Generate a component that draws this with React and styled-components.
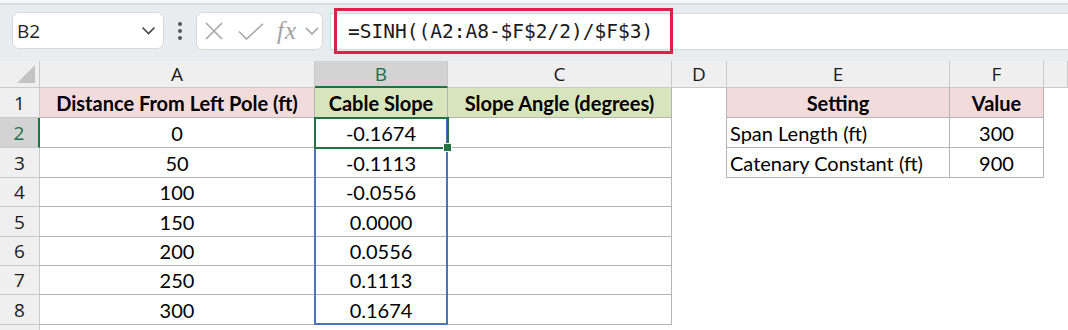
import styled, { createGlobalStyle } from "styled-components";

/*
  엑셀 시트 화면 (수식 입력줄 + 셀 그리드)
*/

const GlobalStyle = createGlobalStyle`
  body {
    margin: 0;
    background: #ffffff;
  }
`;

// 열 너비, 행 높이
const COLS = [
  { key: "A", width: 275 },
  { key: "B", width: 133 },
  { key: "C", width: 224 },
  { key: "D", width: 55 },
  { key: "E", width: 223 },
  { key: "F", width: 94 },
  { key: "G", width: 24 },
];
const ROW_HEIGHTS = [30, 30, 30, 29, 30, 29, 29, 30, 20];
const HEADER_H = 27;
const ROWHEAD_W = 40;

const table = {
  1: { A: "Distance From Left Pole (ft)", B: "Cable Slope", C: "Slope Angle (degrees)", E: "Setting", F: "Value" },
  2: { A: "0", B: "-0.1674", E: "Span Length (ft)", F: "300" },
  3: { A: "50", B: "-0.1113", E: "Catenary Constant (ft)", F: "900" },
  4: { A: "100", B: "-0.0556" },
  5: { A: "150", B: "0.0000" },
  6: { A: "200", B: "0.0556" },
  7: { A: "250", B: "0.1113" },
  8: { A: "300", B: "0.1674" },
};

// 셀 스타일 결정
const getCellProps = (row, col) => {
  const main = row <= 8 && ["A", "B", "C"].includes(col);
  const side = row <= 3 && ["E", "F"].includes(col);
  let fill = "none";
  if (row === 1 && (col === "A" || side)) fill = "pink";
  if (row === 1 && (col === "B" || col === "C")) fill = "green";
  return {
    $bordered: main || side,
    $leftBorder: side && col === "E",
    $fill: fill,
    $bold: row === 1,
    $align: side && col === "E" && row > 1 ? "left" : "center",
  };
};

function App() {
  const colOffsets = [];
  let acc = ROWHEAD_W;
  COLS.forEach((c) => {
    colOffsets.push(acc);
    acc += c.width;
  });
  const rowTop = (r) =>
    HEADER_H + ROW_HEIGHTS.slice(0, r - 1).reduce((a, b) => a + b, 0);

  const bLeft = colOffsets[1];
  const bWidth = COLS[1].width;

  return (
    <>
      <GlobalStyle />
      <Page>
        {/* 수식 입력줄 */}
        <Toolbar>
          <NameBox>
            <span>B2</span>
            <Chevron width="15" height="9" viewBox="0 0 15 9">
              <path d="M1.5 1.5 L7.5 7.5 L13.5 1.5" />
            </Chevron>
          </NameBox>
          <Dots>
            <i />
            <i />
            <i />
          </Dots>
          <FxBox>
            <IconSlot $w={18}>
              <svg width="18" height="18" viewBox="0 0 18 18">
                <path d="M1 1 L17 17 M17 1 L1 17" stroke="#a3a3a3" strokeWidth="1.5" fill="none" />
              </svg>
            </IconSlot>
            <IconSlot $w={26}>
              <svg width="26" height="17" viewBox="0 0 26 17">
                <path d="M1 8.5 L8.5 16 L25 0.8" stroke="#a3a3a3" strokeWidth="1.5" fill="none" />
              </svg>
            </IconSlot>
            <FxText>fx</FxText>
            <Chevron width="14" height="8" viewBox="0 0 14 8" $light>
              <path d="M1 1 L7 7 L13 1" />
            </Chevron>
          </FxBox>
          <FormulaInput>
            <FormulaHighlight>=SINH((A2:A8-$F$2/2)/$F$3)</FormulaHighlight>
          </FormulaInput>
        </Toolbar>

        {/* 시트 그리드 */}
        <Sheet
          $cols={`${ROWHEAD_W}px ${COLS.map((c) => c.width + "px").join(" ")}`}
          $rows={`${HEADER_H}px ${ROW_HEIGHTS.map((h) => h + "px").join(" ")}`}
        >
          <Corner>
            <CornerTriangle />
          </Corner>
          {COLS.map((c) => (
            <ColHeader key={c.key} $active={c.key === "B"}>
              {c.key === "G" ? "" : c.key}
            </ColHeader>
          ))}

          {ROW_HEIGHTS.map((_, i) => {
            const row = i + 1;
            return [
              <RowHeader key={"h" + row} $active={row === 2}>
                {row <= 8 ? row : ""}
              </RowHeader>,
              ...COLS.map((c) => (
                <Cell key={row + c.key} {...getCellProps(row, c.key)}>
                  {table[row] && table[row][c.key]}
                </Cell>
              )),
            ];
          })}

          {/* 선택 범위 B2:B8 */}
          <RangeBox
            style={{
              left: bLeft - 1,
              top: rowTop(2) - 1,
              width: bWidth + 1,
              height: rowTop(9) - rowTop(2) + 1,
            }}
          />
          {/* 활성 셀 B2 */}
          <ActiveCell
            style={{
              left: bLeft - 1,
              top: rowTop(2) - 1,
              width: bWidth + 2,
              height: ROW_HEIGHTS[1] + 2,
            }}
          >
            <FillHandle />
          </ActiveCell>
        </Sheet>
      </Page>
    </>
  );
}

export default App;

/* 스타일 */

const Page = styled.div`
  width: 1068px;
  height: 330px;
  overflow: hidden;
  background: #ffffff;
`;

const Toolbar = styled.div`
  height: 61px;
  box-sizing: border-box;
  background: #e9ecef;
  border-top: 3px solid #f5f6f7;
  box-shadow: inset 0 4px 3px -3px rgba(0, 0, 0, 0.12);
  display: flex;
  align-items: flex-start;
  padding: 9px 0 0 12px;
`;

const NameBox = styled.div`
  width: 152px;
  height: 37px;
  box-sizing: border-box;
  background: #ffffff;
  border: 1px solid #d6d9dc;
  border-radius: 7px;
  display: flex;
  align-items: center;
  justify-content: space-between;
  padding: 0 7px 0 4px;
  font-family: "Open Sans", "Noto Sans", sans-serif;
  font-size: 19px;
  color: #1f1f1f;
`;

const Chevron = styled.svg`
  fill: none;
  stroke: ${(p) => (p.$light ? "#a3a3a3" : "#444")};
  stroke-width: 1.6;
`;

const Dots = styled.div`
  width: 32px;
  height: 37px;
  display: flex;
  flex-direction: column;
  align-items: center;
  justify-content: center;
  gap: 3px;

  i {
    width: 4px;
    height: 4px;
    border-radius: 50%;
    background: #555;
  }
`;

const FxBox = styled.div`
  width: 127px;
  height: 38px;
  box-sizing: border-box;
  background: #ffffff;
  border: 1px solid #d6d9dc;
  border-radius: 7px;
  display: flex;
  align-items: center;
  gap: 0;
  padding: 0 0 0 8px;
`;

const IconSlot = styled.span`
  width: ${(p) => p.$w}px;
  display: flex;
  align-items: center;
  margin-right: 15px;
`;

const FxText = styled.span`
  font-family: "Liberation Serif", "DejaVu Serif", serif;
  font-style: italic;
  font-size: 25px;
  line-height: 1;
  color: #a3a3a3;
  margin: -2px 8px 0 -2px;
  letter-spacing: 1px;
`;

const FormulaInput = styled.div`
  flex: 1;
  height: 37px;
  margin: 1px 0 0 7px;
  box-sizing: border-box;
  background: #ffffff;
  border-top: 1px solid #d6d9dc;
  border-bottom: 1px solid #d6d9dc;
  border-left: 1px solid #d6d9dc;
  position: relative;
`;

const FormulaHighlight = styled.div`
  position: absolute;
  left: 3px;
  top: -6px;
  width: 339px;
  height: 46px;
  box-sizing: border-box;
  border: 3px solid #e0204a;
  display: flex;
  align-items: center;
  padding-left: 11px;
  font-family: "DejaVu Sans Mono", "Liberation Mono", monospace;
  font-size: 19.5px;
  color: #1a1a1a;
`;

const Sheet = styled.div`
  position: relative;
  display: grid;
  grid-template-columns: ${(p) => p.$cols};
  grid-template-rows: ${(p) => p.$rows};
  font-family: "Lato", "Open Sans", sans-serif;
`;

const Corner = styled.div`
  background: #efefef;
  border-right: 1px solid #c9c9c9;
  border-bottom: 1px solid #c9c9c9;
  position: relative;
`;

const CornerTriangle = styled.div`
  position: absolute;
  right: 4px;
  bottom: 4px;
  width: 0;
  height: 0;
  border-left: 18px solid transparent;
  border-bottom: 18px solid #c3c3c3;
`;

const ColHeader = styled.div`
  box-sizing: border-box;
  background: ${(p) => (p.$active ? "#d3d3d3" : "#efefef")};
  color: ${(p) => (p.$active ? "#1d7044" : "#1a1a1a")};
  border-right: 1px solid #c9c9c9;
  border-bottom: ${(p) => (p.$active ? "2px solid #217346" : "1px solid #c9c9c9")};
  display: flex;
  align-items: center;
  justify-content: center;
  font-family: "Open Sans", "Noto Sans", sans-serif;
  font-size: 19px;
  padding-top: ${(p) => (p.$active ? "1px" : "0")};
`;

const RowHeader = styled.div`
  box-sizing: border-box;
  background: ${(p) => (p.$active ? "#d3d3d3" : "#efefef")};
  color: ${(p) => (p.$active ? "#1d7044" : "#1a1a1a")};
  border-right: ${(p) => (p.$active ? "2px solid #217346" : "1px solid #c9c9c9")};
  border-bottom: 1px solid #c9c9c9;
  display: flex;
  align-items: center;
  justify-content: center;
  font-family: "Open Sans", "Noto Sans", sans-serif;
  font-size: 19px;
`;

const fills = {
  none: "#ffffff",
  pink: "#f2dcdb",
  green: "#d8e4bc",
};

const Cell = styled.div`
  box-sizing: border-box;
  background: ${(p) => fills[p.$fill]};
  border-right: 1px solid ${(p) => (p.$bordered ? "#b4b4b4" : "transparent")};
  border-bottom: 1px solid ${(p) => (p.$bordered ? "#b4b4b4" : "transparent")};
  border-left: ${(p) => (p.$leftBorder ? "1px solid #b4b4b4" : "none")};
  margin-left: ${(p) => (p.$leftBorder ? "-1px" : "0")};
  display: flex;
  align-items: center;
  justify-content: ${(p) => (p.$align === "left" ? "flex-start" : "center")};
  padding: ${(p) => (p.$align === "left" ? "0 3px" : "0")};
  font-size: 20px;
  font-weight: ${(p) => (p.$bold ? 700 : 400)};
  color: #000000;
  white-space: nowrap;
`;

const RangeBox = styled.div`
  position: absolute;
  box-sizing: border-box;
  border: 2px solid #4a74bf;
  pointer-events: none;
`;

const ActiveCell = styled.div`
  position: absolute;
  box-sizing: border-box;
  border: 2px solid #217346;
  pointer-events: none;
`;

const FillHandle = styled.div`
  position: absolute;
  right: -5px;
  bottom: -5px;
  width: 7px;
  height: 7px;
  background: #217346;
  border: 1px solid #ffffff;
`;
